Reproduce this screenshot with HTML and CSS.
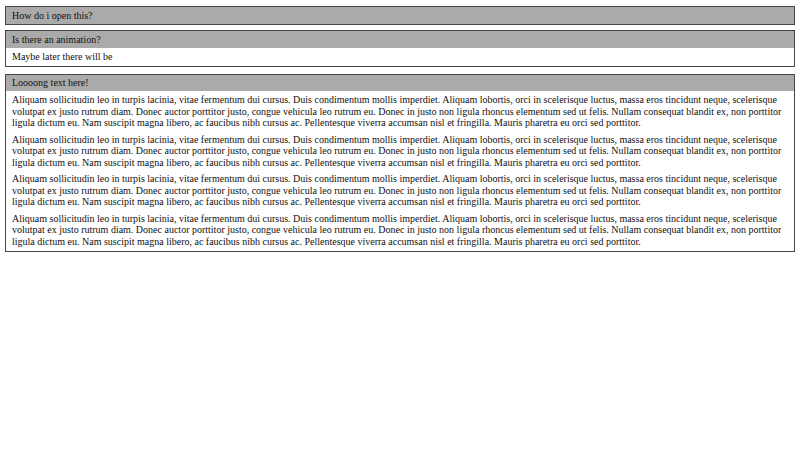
FILE: index.html
```html
<!DOCTYPE html>
<html>
<head>
<meta charset="utf-8">
<link rel="stylesheet" href="styles.css">
</head>
<body>
<div class="accordion">
  <section class="item">
    <div class="title">How do i open this?</div>
  </section>
  <section class="item open">
    <div class="title">Is there an animation?</div>
    <div class="content"><p>Maybe later there will be</p></div>
  </section>
  <section class="item open">
    <div class="title">Loooong text here!</div>
    <div class="content">
      <p>Aliquam sollicitudin leo in turpis lacinia, vitae fermentum dui cursus. Duis condimentum mollis imperdiet. Aliquam lobortis, orci in scelerisque luctus, massa eros tincidunt neque, scelerisque volutpat ex justo rutrum diam. Donec auctor porttitor justo, congue vehicula leo rutrum eu. Donec in justo non ligula rhoncus elementum sed ut felis. Nullam consequat blandit ex, non porttitor ligula dictum eu. Nam suscipit magna libero, ac faucibus nibh cursus ac. Pellentesque viverra accumsan nisl et fringilla. Mauris pharetra eu orci sed porttitor.</p>
      <p>Aliquam sollicitudin leo in turpis lacinia, vitae fermentum dui cursus. Duis condimentum mollis imperdiet. Aliquam lobortis, orci in scelerisque luctus, massa eros tincidunt neque, scelerisque volutpat ex justo rutrum diam. Donec auctor porttitor justo, congue vehicula leo rutrum eu. Donec in justo non ligula rhoncus elementum sed ut felis. Nullam consequat blandit ex, non porttitor ligula dictum eu. Nam suscipit magna libero, ac faucibus nibh cursus ac. Pellentesque viverra accumsan nisl et fringilla. Mauris pharetra eu orci sed porttitor.</p>
      <p>Aliquam sollicitudin leo in turpis lacinia, vitae fermentum dui cursus. Duis condimentum mollis imperdiet. Aliquam lobortis, orci in scelerisque luctus, massa eros tincidunt neque, scelerisque volutpat ex justo rutrum diam. Donec auctor porttitor justo, congue vehicula leo rutrum eu. Donec in justo non ligula rhoncus elementum sed ut felis. Nullam consequat blandit ex, non porttitor ligula dictum eu. Nam suscipit magna libero, ac faucibus nibh cursus ac. Pellentesque viverra accumsan nisl et fringilla. Mauris pharetra eu orci sed porttitor.</p>
      <p>Aliquam sollicitudin leo in turpis lacinia, vitae fermentum dui cursus. Duis condimentum mollis imperdiet. Aliquam lobortis, orci in scelerisque luctus, massa eros tincidunt neque, scelerisque volutpat ex justo rutrum diam. Donec auctor porttitor justo, congue vehicula leo rutrum eu. Donec in justo non ligula rhoncus elementum sed ut felis. Nullam consequat blandit ex, non porttitor ligula dictum eu. Nam suscipit magna libero, ac faucibus nibh cursus ac. Pellentesque viverra accumsan nisl et fringilla. Mauris pharetra eu orci sed porttitor.</p>
    </div>
  </section>
</div>
</body>
</html>
```
FILE: styles.css
```css
html, body {
  margin: 0;
  background: #fff;
}
body {
  font-family: "Liberation Serif", "Times New Roman", serif;
  font-size: 10px;
  line-height: 11.5px;
  color: #111;
}
.accordion {
  padding: 6px 5px;
  display: flex;
  flex-direction: column;
  gap: 5.5px;
}
.item {
  border: 1px solid #444;
}
.item.open {
  margin-bottom: 1.5px;
}
.title {
  background: #aaa;
  padding: 2.5px 6px;
}
.content {
  padding: 3px 6px 3.5px 6px;
  display: flex;
  flex-direction: column;
  gap: 5px;
}
.content p {
  margin: 0;
}
```
